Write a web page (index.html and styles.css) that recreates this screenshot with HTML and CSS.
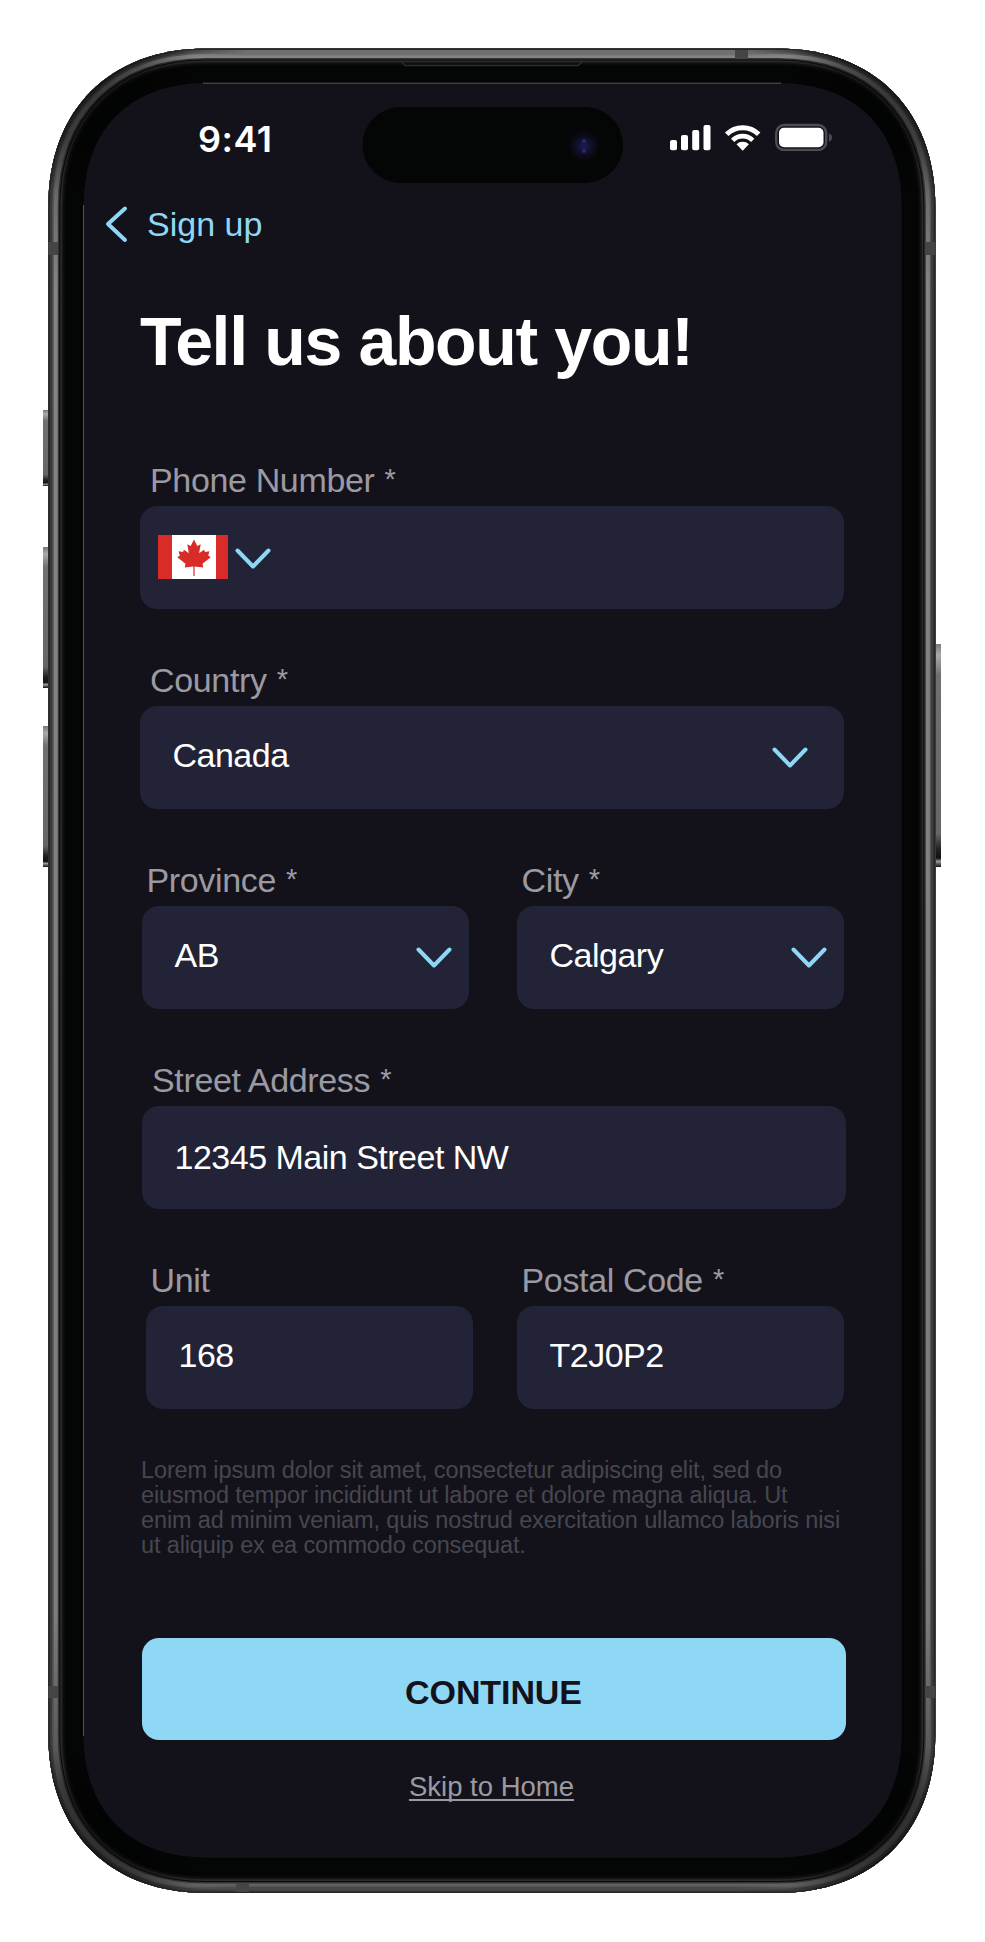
FILE: index.html
```html
<!DOCTYPE html>
<html lang="en">
<head>
<meta charset="utf-8">
<title>Tell us about you</title>
<link rel="stylesheet" href="styles.css">
</head>
<body>
<main class="stage">
  <svg class="device" viewBox="0 0 985 1942" aria-hidden="true">
    <defs>
      <path id="body" d="M206.300 48.500H777.300C873.800 48.500 935.300 110 935.300 206.500V1735C935.300 1831.500 873.800 1893 777.300 1893H206.300C109.800 1893 48.300 1831.500 48.300 1735V206.500C48.300 110 109.800 48.500 206.300 48.500Z"/>
      <clipPath id="bodyClip"><use href="#body"/></clipPath>
      <linearGradient id="key" x1="0" y1="0" x2="0" y2="1">
        <stop offset="0" stop-color="#777"/><stop offset=".05" stop-color="#aaa"/><stop offset=".14" stop-color="#707070"/><stop offset=".85" stop-color="#666"/><stop offset=".92" stop-color="#222"/><stop offset=".96" stop-color="#111"/><stop offset=".975" stop-color="#999"/><stop offset="1" stop-color="#111"/>
      </linearGradient>
      <linearGradient id="metal" x1="0" y1="0" x2="0" y2="1">
        <stop offset="0" stop-color="#8b8b8b"/><stop offset=".02" stop-color="#6c6c6c"/><stop offset=".06" stop-color="#606060"/><stop offset=".13" stop-color="#858585"/><stop offset=".85" stop-color="#7c7c7c"/><stop offset=".94" stop-color="#505050"/><stop offset="1" stop-color="#606361"/>
      </linearGradient>
      <linearGradient id="topShine" gradientUnits="userSpaceOnUse" x1="170" y1="0" x2="814" y2="0">
        <stop offset="0" stop-color="#707070" stop-opacity="0"/><stop offset=".12" stop-color="#707070"/><stop offset=".88" stop-color="#707070"/><stop offset="1" stop-color="#707070" stop-opacity="0"/>
      </linearGradient>
      <linearGradient id="bottomShine" gradientUnits="userSpaceOnUse" x1="170" y1="0" x2="814" y2="0">
        <stop offset="0" stop-color="#474947" stop-opacity="0"/><stop offset=".12" stop-color="#474947"/><stop offset=".88" stop-color="#474947"/><stop offset="1" stop-color="#474947" stop-opacity="0"/>
      </linearGradient>
      <radialGradient id="shade"><stop offset="0" stop-color="#000" stop-opacity=".5"/><stop offset=".5" stop-color="#000" stop-opacity=".38"/><stop offset="1" stop-color="#000" stop-opacity="0"/></radialGradient>
      <radialGradient id="lens"><stop offset="0" stop-color="#1c1c55"/><stop offset=".35" stop-color="#121230"/><stop offset=".7" stop-color="#0b0912"/><stop offset="1" stop-color="#040505"/></radialGradient>
    </defs>
    <g fill="url(#key)">
      <rect x="43" y="410" width="6" height="76"/>
      <rect x="43" y="547" width="6" height="141"/>
      <rect x="43" y="726" width="6" height="141"/>
      <rect x="935" y="644" width="6" height="223"/>
    </g>
    <g clip-path="url(#bodyClip)" fill="none">
      <use href="#body" fill="#040505"/>
      <use href="#body" stroke="#0b0b0b" stroke-width="34"/>
      <use href="#body" stroke="#161716" stroke-width="30"/>
      <use href="#body" stroke="#2a2b2a" stroke-width="27"/>
      <use href="#body" stroke="#0a0a0a" stroke-width="24"/>
      <use href="#body" stroke="#333" stroke-width="22"/>
      <use href="#body" stroke="url(#metal)" stroke-width="19"/>
      <use href="#body" stroke="#555" stroke-width="11"/>
      <use href="#body" stroke="#3a3a3a" stroke-width="8"/>
      <use href="#body" stroke="#262626" stroke-width="3"/>
      <rect x="170" y="50" width="644" height="5.500" fill="url(#topShine)"/>
      <rect x="170" y="1886.500" width="644" height="4" fill="url(#bottomShine)"/>
      <g fill="url(#shade)"><circle cx="85" cy="85" r="115"/><circle cx="899" cy="85" r="115"/><circle cx="85" cy="1857" r="115"/><circle cx="899" cy="1857" r="115"/></g>
      <g fill="#454545">
        <rect x="48" y="242" width="10" height="13"/><rect x="925" y="242" width="10" height="13"/>
        <rect x="48" y="1686" width="10" height="12"/><rect x="925" y="1686" width="10" height="12"/>
        <rect x="735" y="50" width="13" height="9"/><rect x="236" y="1883" width="13" height="9"/>
      </g>
      <path d="M401 61L405 65.500H578L583 61" stroke="#2d2d2d" stroke-width="1.300"/>
    </g>
    <path fill="#13121b" d="M207.500 83H777.700C855.700 83 901.700 129 901.700 207V1733.700C901.700 1811.700 855.700 1857.700 777.700 1857.700H207.500C129.500 1857.700 83.500 1811.700 83.500 1733.700V207C83.500 129 129.500 83 207.500 83Z"/>
    <path d="M203 83.200H781M83.600 205V1736" fill="none" stroke="#55555d"/>
    <rect x="362.500" y="107" width="260.500" height="76" rx="38" fill="#040505"/>
    <circle cx="584" cy="146" r="17" fill="url(#lens)"/>
    <circle cx="584" cy="141" r="2" fill="#282878"/><circle cx="584" cy="151" r="2" fill="#282878"/>
  </svg>

  <div class="screen">
    <header class="status">
      <span class="time">9:41</span>
      <svg class="indicators" viewBox="0 0 164 28" fill="#fff" aria-hidden="true">
        <rect x="1" y="17" width="7" height="10.300" rx="2"/><rect x="12" y="12" width="7" height="15.300" rx="2"/><rect x="23.200" y="7" width="7" height="20.300" rx="2"/><rect x="34.500" y="2" width="7" height="25.300" rx="2"/>
        <g fill="none" stroke="#fff" stroke-width="5"><path d="M57.700 11.300a22.700 22.700 0 0 1 32 0"/><path d="M63.700 17.300a14.200 14.200 0 0 1 20 0" stroke-width="4.700"/></g>
        <path d="M67.500 21.300a9 9 0 0 1 12.400 0L73.700 27.800Z"/>
        <rect x="107.200" y="2" width="50" height="25" rx="8" fill="none" stroke="#4d4c55" stroke-width="2.400"/>
        <rect x="110" y="4.800" width="44.500" height="19.400" rx="5"/>
        <path d="M160 10.500q3 1 3 4t-3 4z" fill="#4d4c55"/>
      </svg>
    </header>

    <a class="back"><svg viewBox="0 0 24 38"><path d="M21 3.500L4 19L21 35"/></svg><span>Sign up</span></a>
    <h1 class="title">Tell us about you!</h1>

    <form class="form">
      <div class="field">
        <label>Phone Number <span class="req">*</span></label>
        <div class="box phone">
          <svg class="flag" viewBox="0 0 70 44"><path fill="#fff" d="M0 0h70v44H0z"/><path fill="#d92b27" d="M0 0h14v44H0zM58 0h12v44H58z"/><path fill="#d92b27" d="M36 4.500L39.300 11L42.700 9.300L41.100 18.300L46 14.800L47.100 17L51.500 16.200L50.200 20.500L52.700 22.300L44.500 28.800L45.300 32.500L36.600 31.500V41H35.400V31.500L26.700 32.500L27.500 28.800L19.300 22.300L21.800 20.500L20.500 16.200L24.900 17L26 14.800L30.900 18.300L29.300 9.300L32.700 11Z"/></svg>
          <svg class="chevron" viewBox="0 0 36 22"><path d="M2.500 2.500L18 18.500L33.500 2.500"/></svg>
        </div>
      </div>
      <div class="field">
        <label>Country <span class="req">*</span></label>
        <div class="box"><span>Canada</span><svg class="chevron" viewBox="0 0 36 22"><path d="M2.500 2.500L18 18.500L33.500 2.500"/></svg></div>
      </div>
      <div class="pair">
        <div class="field province">
          <label>Province <span class="req">*</span></label>
          <div class="box short"><span>AB</span><svg class="chevron" viewBox="0 0 36 22"><path d="M2.500 2.500L18 18.500L33.500 2.500"/></svg></div>
        </div>
        <div class="field city">
          <label>City <span class="req">*</span></label>
          <div class="box short"><span>Calgary</span><svg class="chevron" viewBox="0 0 36 22"><path d="M2.500 2.500L18 18.500L33.500 2.500"/></svg></div>
        </div>
      </div>
      <div class="field street">
        <label>Street Address <span class="req">*</span></label>
        <div class="box"><span>12345 Main Street NW</span></div>
      </div>
      <div class="pair">
        <div class="field unit">
          <label>Unit</label>
          <div class="box"><span>168</span></div>
        </div>
        <div class="field city">
          <label>Postal Code <span class="req">*</span></label>
          <div class="box"><span>T2J0P2</span></div>
        </div>
      </div>
    </form>

    <p class="note">Lorem ipsum dolor sit amet, consectetur adipiscing elit, sed do<br>eiusmod tempor incididunt ut labore et dolore magna aliqua. Ut<br>enim ad minim veniam, quis nostrud exercitation ullamco laboris nisi<br>ut aliquip ex ea commodo consequat.</p>
    <button class="continue" type="button">CONTINUE</button>
    <a class="skip"><span>Skip to Home</span></a>
  </div>
</main>
</body>
</html>
```
FILE: styles.css
```css
* { box-sizing: border-box; }
body { margin: 0; background: #fff; font-family: "Liberation Sans", Arial, sans-serif; color: #fff; }
.stage { width: 985px; height: 1942px; position: relative; padding: 83px 84px 84px 83px; overflow: hidden; }
.device { position: absolute; inset: 0; width: 985px; height: 1942px; }
.screen { position: relative; height: 1775px; display: flex; flex-direction: column; }

.status { display: flex; justify-content: space-between; height: 76px; margin-top: 17px; padding: 23px 68px 0 115px; }
.time { font: 600 36px/32px Inter, sans-serif; letter-spacing: .5px; }
.indicators { width: 164px; height: 28px; }

.back { display: flex; align-items: center; gap: 19px; height: 48px; margin: 24px 0 0 21px; color: #8ed8f6; font-size: 34px; }
.back svg { width: 24px; height: 38px; fill: none; stroke: #8ed8f6; stroke-width: 4; stroke-linecap: round; stroke-linejoin: round; }
.title { margin: 53px 0 0 57px; font-size: 68px; line-height: 80px; font-weight: 700; letter-spacing: -1.35px; white-space: nowrap; }

.form { display: flex; flex-direction: column; gap: 53px; margin: 80px 0 0 56.5px; width: 704px; }
.field { display: flex; flex-direction: column; }
.field label { height: 45px; line-height: 38px; padding-left: 10.5px; font-size: 34px; letter-spacing: -.35px; color: #9b9aa2; white-space: nowrap; }
.req { font-size: 29px; line-height: 1; position: relative; top: -3px; left: 1px; }
.box { display: flex; align-items: center; justify-content: space-between; height: 102.5px; margin-bottom: -.5px; padding: 0 36px 4px 33px; border-radius: 17px; background: #222336; font-size: 34px; letter-spacing: -.5px; white-space: nowrap; }
.phone { justify-content: flex-start; gap: 8px; padding: 0 18px; }
.chevron { width: 36px; height: 22px; fill: none; stroke: #8ed8f6; stroke-width: 4; stroke-linecap: round; stroke-linejoin: round; position: relative; top: 3px; }
.phone .chevron { top: 2px; left: -1px; }
.flag { width: 70px; height: 44px; }
.pair { display: flex; justify-content: space-between; }
.pair .field { width: 327px; }
.province { margin-left: 2px; }
.province label, .city label { padding-left: 5px; }
.unit { margin-left: 6px; }
.unit label { padding-left: 5px; }
.short { padding-right: 17px; }
.street { width: 704px; margin-left: 2px; }
.street .box { padding-bottom: 0; }

.note { margin: 50px 0 0 58px; font-size: 23.5px; line-height: 25px; letter-spacing: -.13px; color: #47464f; white-space: nowrap; }
.continue { width: 704px; height: 102px; margin: 80px 0 0 58.5px; padding: 6px 0 0; border: 0; border-radius: 17px; background: #8ed8f6; color: #13121b; font: 700 34px "Liberation Sans", Arial, sans-serif; letter-spacing: -.1px; }
.skip { margin: 31px 1px 0 0; align-self: center; font-size: 27.5px; line-height: 32px; color: #9b9aa2; text-decoration: underline; text-decoration-skip-ink: none; text-underline-offset: 3px; text-decoration-thickness: 2px; }
```
